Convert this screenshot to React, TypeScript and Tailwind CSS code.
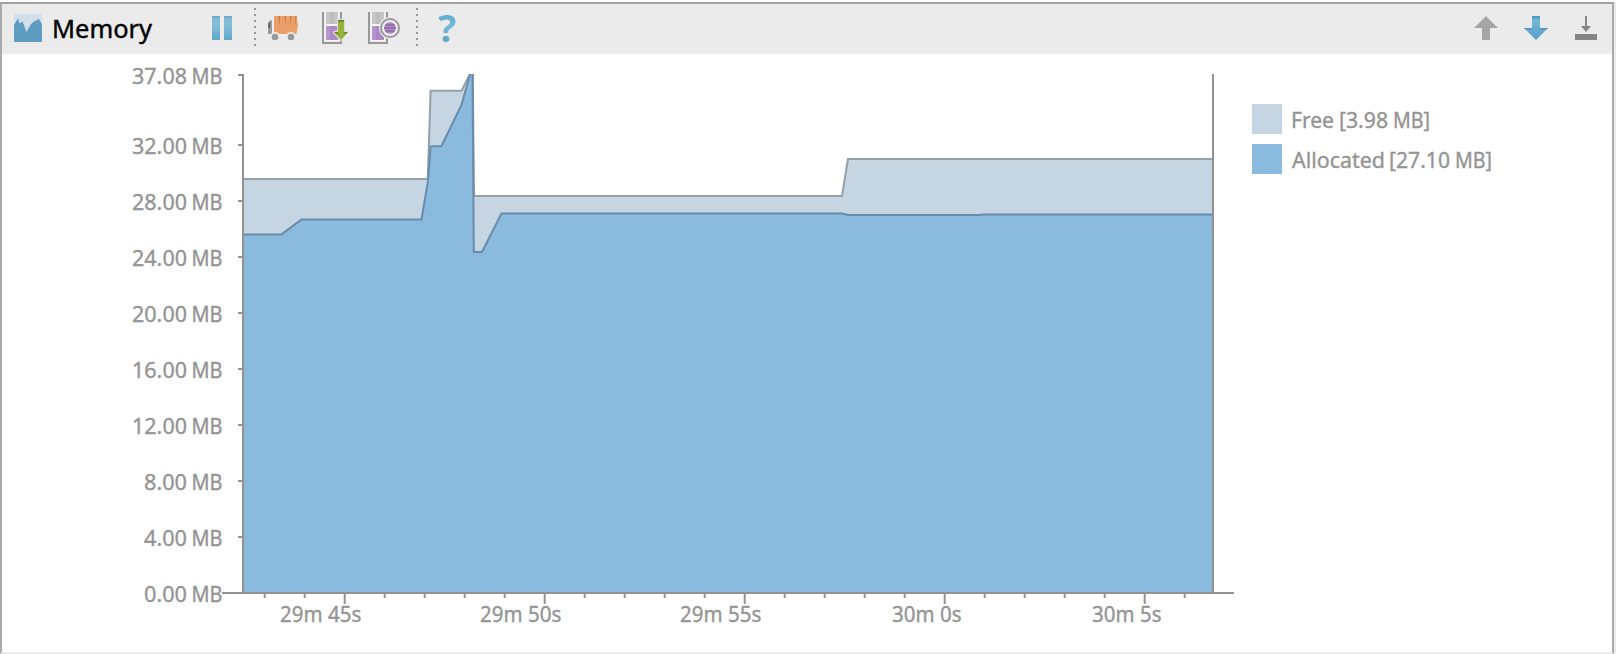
import type { ReactNode } from "react";

type Point = [number, number];

// text, left edge, width
type Word = [string, number, number];

interface IconProps {
  children: ReactNode;
  className: string;
  label: string;
}

// plot coordinates, 14px per MB and 40px per second
const BASELINE = 518;

const freeSeries: Point[] = [
  [243, 105], [427.8, 105], [430.6, 16.7], [461.5, 16.7], [470, 0], [472.8, 0],
  [474, 122], [842, 122], [848, 85], [1213, 85],
];

const allocatedSeries: Point[] = [
  [243, 160.4], [281.5, 160.4], [301.5, 145.5], [421.5, 145.5], [428, 107], [430.5, 72.5],
  [441.5, 72], [461.5, 31], [471, -3], [472.5, -3], [473.8, 178], [482, 178],
  [501.5, 139.6], [842, 139.6], [848, 141], [980, 141], [982, 140.5], [1213, 140.5],
];

const memoryLabels = [
  { value: "37.08", y: 10.4 },
  { value: "32.00", y: 80.4 },
  { value: "28.00", y: 136.4 },
  { value: "24.00", y: 192.4 },
  { value: "20.00", y: 248.4 },
  { value: "16.00", y: 304.4 },
  { value: "12.00", y: 360.4 },
  { value: "8.00", y: 416.4 },
  { value: "4.00", y: 472.4 },
  { value: "0.00", y: 528.4 },
];

const timeLabels = [
  { minutes: "29m", seconds: "45s", x: 280 },
  { minutes: "29m", seconds: "50s", x: 480 },
  { minutes: "29m", seconds: "55s", x: 680 },
  { minutes: "30m", seconds: "0s", x: 892 },
  { minutes: "30m", seconds: "5s", x: 1092 },
];

const legend: { color: string; words: Word[] }[] = [
  { color: "bg-[#c6d5e2]", words: [["Free", -1, 43], ["[3.98", 47, 49], ["MB]", 101, 37]] },
  { color: "bg-[#8bbadf]", words: [["Allocated", 0, 93], ["[27.10", 97, 61], ["MB]", 163, 37]] },
];

const ticks = Array.from({ length: 24 }, (_, i) => i);

const toPath = (points: Point[]) => "M" + points.map((p) => p.join(" ")).join("L");
const toArea = (points: Point[]) => `${toPath(points)}V${BASELINE}H243Z`;

function Label({ words, y }: { words: Word[]; y: number }) {
  return (
    <text y={y} fontSize="21" fill="#949494" stroke="#949494" strokeWidth=".35">
      {words.map(([word, x, width], i) => (
        <tspan key={i} x={x} textLength={width} lengthAdjust="spacingAndGlyphs">
          {word}
        </tspan>
      ))}
    </text>
  );
}

function ToolButton({ children, className, label }: IconProps) {
  return (
    <button type="button" aria-label={label} className={`block shrink-0 ${className}`}>
      {children}
    </button>
  );
}

function Separator({ className }: { className: string }) {
  return (
    <svg className={`-mt-0.5 h-[38px] w-0.5 shrink-0 ${className}`} viewBox="0 0 2 38">
      <path d="M1 0V38" stroke="#979797" strokeWidth="2" strokeDasharray="2 4" />
    </svg>
  );
}

function HeapFrame() {
  return (
    <>
      <path d="M3 0H17V29H3Z" fill="#f6f6f6" />
      <path d="M4 0H16V12H4Z" fill="#bdbdbd" />
      <path d="M4 0H8V12H4ZM12 0H16V12H12Z" fill="#c6c6c6" />
      <path d="M4 14H16V28H4Z" fill="#ae88c5" />
      <path d="M4 14H8V28H4Z" fill="#b692ce" />
      <path d="M1 0V31H19V0" fill="none" stroke="#999" strokeWidth="2" />
    </>
  );
}

function Toolbar() {
  return (
    <header className="flex h-[50px] items-center bg-[#ebebeb] pb-0.5 pl-3">
      <svg className="h-7 w-7 shrink-0" viewBox="0 0 28 28">
        <path d="M0 0H28V28H0Z" fill="#d0dfea" />
        <path d="M0 11 4 4.5 5.5 9.5 8.5 7.5 12.5 18 17 10 20 7.5 25 5 28 10.5V28H0Z" fill="#5f9cc2" />
      </svg>
      <svg className="ml-2.5 h-10 w-[104px] shrink-0 overflow-visible" viewBox="0 0 104 40">
        <text
          x="0"
          y="29.5"
          textLength="100"
          lengthAdjust="spacingAndGlyphs"
          fontSize="26"
          stroke="#000"
          strokeWidth=".4"
        >
          Memory
        </text>
      </svg>

      <ToolButton label="Pause" className="ml-14 h-6 w-5">
        <svg viewBox="0 0 20 24">
          <defs>
            <linearGradient id="pause" x1="0" x2="0" y1="0" y2="1">
              <stop offset="0" stopColor="#67a4cc" />
              <stop offset=".12" stopColor="#83b9d7" />
              <stop offset=".4" stopColor="#84bcd8" />
              <stop offset="1" stopColor="#5ea7c8" />
            </linearGradient>
          </defs>
          <path d="M0 0H8V24H0ZM12 0H20V24H12Z" fill="url(#pause)" />
        </svg>
      </ToolButton>
      <Separator className="ml-[22px]" />

      <ToolButton label="Initiate GC" className="ml-3 h-[26px] w-[31px]">
        <svg viewBox="0 0 31 26">
          <path d="M6 1H28.5L30 10 28.5 19H6Z" fill="#eb9f68" />
          <path d="M10 1H12V12ZM16 1H18V12ZM24 1H22V12ZM29 1H27V12Z" fill="#cb8253" />
          <path d="M0 8 1.5 5.5H4V19H0Z" fill="#999" />
          <path d="M.5 9 2 7V13H.5Z" fill="#555" />
          <circle cx="7" cy="22" r="5" fill="#ebebeb" />
          <circle cx="23" cy="22" r="5" fill="#ebebeb" />
          <circle cx="7" cy="22" r="3.3" fill="#999" />
          <circle cx="23" cy="22" r="3.3" fill="#999" />
        </svg>
      </ToolButton>

      <ToolButton label="Dump Java heap" className="ml-[23px] h-8 w-[26px]">
        <svg viewBox="0 0 26 32">
          <HeapFrame />
          <path d="M15 7H23V19H26L19 29.5 10.5 20.5 13 18.5H15Z" fill="#dcd8e0" />
          <path d="M16 8H22V20H26L19 28 12 20H16Z" fill="#97b43a" />
          <path d="M16 8H22V10H16Z" fill="#708b22" />
          <path d="M12 20H16L17 22H14ZM22 20H26L24 22H21Z" fill="#708b22" />
        </svg>
      </ToolButton>

      <ToolButton label="Start allocation tracking" className="ml-5 h-8 w-8">
        <svg viewBox="0 0 32 32">
          <HeapFrame />
          <circle cx="22" cy="16" r="11" fill="#ebebeb" />
          <circle cx="22" cy="16" r="9" fill="#f1f1f1" stroke="#999" strokeWidth="2" />
          <circle cx="22" cy="16" r="6" fill="#b28bca" />
          <path d="M17.5 13H26.5M16 16H28M17.5 19H26.5" stroke="#866a9c" strokeWidth="1.3" />
        </svg>
      </ToolButton>
      <Separator className="ml-4" />

      <ToolButton label="Help" className="ml-5 h-7 w-[18px]">
        <svg className="overflow-visible" viewBox="0 0 18 28">
          <defs>
            <linearGradient id="help" x1="0" x2="0" y1="0" y2="1">
              <stop offset=".2" stopColor="#5fa9d0" />
              <stop offset=".5" stopColor="#74bbd8" />
              <stop offset="1" stopColor="#4a92bc" />
            </linearGradient>
          </defs>
          <text x="0" y="27.5" fontSize="38" fontWeight="700" textLength="18" lengthAdjust="spacingAndGlyphs" fill="url(#help)">
            ?
          </text>
        </svg>
      </ToolButton>

      <div className="ml-auto flex items-center gap-[26px] pr-[15px]">
        <ToolButton label="Move up" className="h-6 w-6">
          <svg viewBox="0 0 24 24">
            <path d="M12 0 24 12H16V24H8V12H0Z" fill="#a5a5a5" />
          </svg>
        </ToolButton>
        <ToolButton label="Move down" className="h-6 w-6">
          <svg viewBox="0 0 24 24">
            <defs>
              <linearGradient id="down" x1="0" x2="0" y1="0" y2="1">
                <stop offset="0" stopColor="#5ba3cb" />
                <stop offset=".2" stopColor="#74b9d6" />
                <stop offset="1" stopColor="#55a1c8" />
              </linearGradient>
            </defs>
            <path d="M8 0H16V12H24L12 24 0 12H8Z" fill="url(#down)" />
            <path d="M8 0H16V1.5H8ZM0 12H8L9 13.5H1.5ZM24 12H16L15 13.5H22.5Z" fill="#4b96c1" />
          </svg>
        </ToolButton>
        <ToolButton label="Minimize" className="ml-px h-6 w-[22px]">
          <svg viewBox="0 0 22 24">
            <path d="M10 0H12V10H16L11 16 6 10H10ZM0 18H22V24H0Z" fill="#858585" />
          </svg>
        </ToolButton>
      </div>
    </header>
  );
}

function MemoryChart() {
  return (
    <svg className="h-[560px] w-[1234px] shrink-0 overflow-visible" viewBox="2 0 1234 560">
      <clipPath id="plot">
        <path d="M243 0H1213V519H243Z" />
      </clipPath>
      <g clipPath="url(#plot)">
        <path d={toArea(freeSeries)} fill="#c6d5e2" />
        <path d={toPath(freeSeries)} fill="none" stroke="#94a0aa" strokeWidth="2" />
        <path d={toArea(allocatedSeries)} fill="#8bbadf" />
        <path d={toPath(allocatedSeries)} fill="none" stroke="#688baa" strokeWidth="2" />
      </g>

      {/* axes */}
      <path d="M238 1H243V519M1213 0V519M222 519H1234" fill="none" stroke="#929292" strokeWidth="2" />

      {memoryLabels.map(({ value, y }, i) => (
        <g key={value}>
          <Label
            y={y}
            words={[
              value.length === 5 ? [value, 132, 55] : [value, 144, 43],
              ["MB", 191.5, 31],
            ]}
          />
          {i > 0 && i < 9 && <path d={`M238 ${y - 9.4}H243`} stroke="#929292" strokeWidth="2" />}
        </g>
      ))}

      {ticks.map((i) => (
        <path
          key={i}
          d={`M${264.7 + i * 40} 520V${i % 5 === 2 ? 530 : 524}`}
          stroke="#929292"
          strokeWidth="2"
        />
      ))}
      {timeLabels.map(({ minutes, seconds, x }) => (
        <Label
          key={x}
          y={548.4}
          words={[
            [minutes, x, 42.5],
            [seconds, x + 48, seconds.length === 3 ? 33.5 : 21.5],
          ]}
        />
      ))}
    </svg>
  );
}

function Legend() {
  return (
    <ul className="ml-4 mt-[30px] flex flex-col gap-2.5">
      {legend.map(({ color, words }) => (
        <li key={color} className="flex items-center gap-2.5">
          <span className={`size-[30px] shrink-0 ${color}`} />
          <svg className="h-[30px] w-[200px] overflow-visible">
            <Label words={words} y={24.4} />
          </svg>
        </li>
      ))}
    </ul>
  );
}

export default function App() {
  return (
    <div className="h-[654px] w-[1616px] overflow-hidden bg-white pt-0.5 font-['Noto_Sans','Open_Sans',sans-serif]">
      <div className="flex h-[652px] border-r-2 border-[#ebebeb]">
        <main className="flex grow flex-col border-x-2 border-t-2 border-b-2 border-x-[#ababab] border-t-[#a1a1a1] border-b-[#ebebeb]">
          <Toolbar />
          <section className="flex pt-5">
            <MemoryChart />
            <Legend />
          </section>
        </main>
      </div>
    </div>
  );
}
